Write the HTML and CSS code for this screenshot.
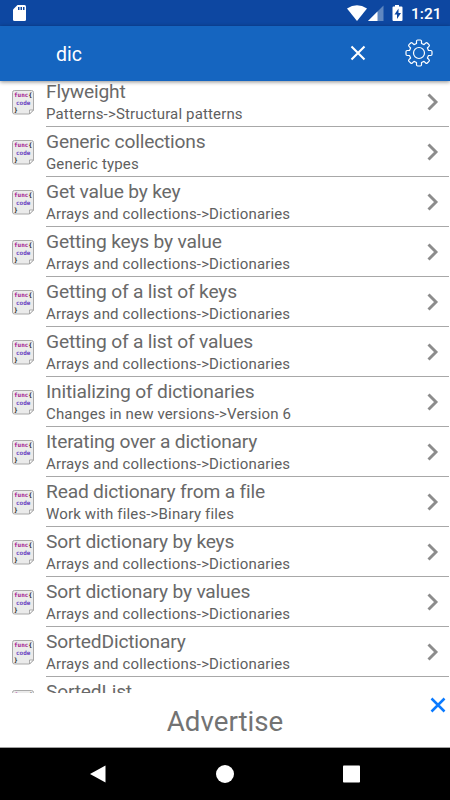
FILE: index.html
```html
<!DOCTYPE html>
<html lang="en">
<head>
<meta charset="utf-8">
<title>Search</title>
<link rel="stylesheet" href="styles.css">
</head>
<body>
<svg class="defs" aria-hidden="true">
  <symbol id="snippet" viewBox="0 0 22 25">
    <path d="M2.500.5h17a2 2 0 0 1 2 2V20l-4 4h-15a2 2 0 0 1-2-2V2.500a2 2 0 0 1 2-2z" fill="#ebebeb" stroke="#a9a9a9"/>
    <path d="M17.500 24v-4h4z" fill="#fff" stroke="#999" stroke-width=".8"/>
    <text x="2" y="6.500" class="fn">func</text>
    <text x="16.500" y="7" class="brace">{</text>
    <text x="4" y="14.500" class="code">code</text>
    <text x="2" y="22" class="brace">}</text>
  </symbol>
  <symbol id="chevron" viewBox="0 0 12 18"><path d="M1.500 1.500 9 9l-7.500 7.500" fill="none" stroke="#8c8c8c" stroke-width="2.900"/></symbol>
</svg>
<div class="screen">
  <div class="status">
    <svg class="sd" viewBox="0 0 13 16"><path d="M4.500 0H11.500A1.500 1.500 0 0 1 13 1.500v13a1.500 1.500 0 0 1-1.500 1.500h-10A1.500 1.500 0 0 1 0 14.500V4.500z" fill="#fff"/><path d="M5 2h1.500v3H5zM7.500 2H9v3H7.500zM10 2h1.500v3H10z" fill="#0d47a1"/></svg>
    <svg class="signals" viewBox="0 0 60 18">
      <path d="M0 3.500Q10 -3 20 3.500L10 16z" fill="#fff"/>
      <path d="M36.500.5V16H21z" fill="#5f87c0"/><path d="M30.500 6.500V16H21z" fill="#fff"/>
      <path d="M48 1.500V0h4v1.500h2.500a1 1 0 0 1 1 1V15a1 1 0 0 1-1 1h-8a1 1 0 0 1-1-1V2.500a1 1 0 0 1 1-1z" fill="#fff"/>
      <path d="M51.500 3.500 47.500 9.500h2.500V14l4-6h-2.500z" fill="#0d47a1"/>
    </svg>
    <span class="clock">1:21</span>
  </div>
  <div class="toolbar">
    <span class="query">dic</span>
    <svg class="clear" viewBox="0 0 16 16"><path d="m1.500 1.500 13 13m0-13-13 13" stroke="#fff" stroke-width="2.100"/></svg>
    <svg class="gear" viewBox="0 0 28 28"><path d="M11.500 4.500V2.200Q11.500 1 12.700 1h2.600Q16.500 1 16.500 2.200V4.500L19 5.600 20.700 4Q21.500 3.200 22.300 4L24 5.700Q24.800 6.500 24 7.300L22.400 9 23.500 11.500h2.300Q27 11.500 27 12.700v2.600Q27 16.500 25.800 16.500H23.500L22.400 19l1.600 1.700Q24.800 21.500 24 22.300L22.300 24Q21.500 24.800 20.700 24L19 22.400 16.500 23.500v2.300Q16.500 27 15.300 27h-2.600Q11.500 27 11.500 25.800V23.500L9 22.400 7.300 24Q6.500 24.800 5.700 24L4 22.300Q3.200 21.500 4 20.700L5.600 19 4.500 16.500H2.200Q1 16.500 1 15.300v-2.600Q1 11.500 2.200 11.500H4.500L5.600 9 4 7.300Q3.200 6.500 4 5.700L5.700 4Q6.500 3.200 7.300 4L9 5.600z"/><circle cx="14" cy="14" r="5.500"/></svg>
  </div>
  <ul class="list">
    <li class="row"><svg class="icon"><use href="#snippet"/></svg><div class="body"><div class="texts"><div class="title">Flyweight</div><div class="path">Patterns-&gt;Structural patterns</div></div><svg class="chev"><use href="#chevron"/></svg></div></li>
    <li class="row"><svg class="icon"><use href="#snippet"/></svg><div class="body"><div class="texts"><div class="title">Generic collections</div><div class="path">Generic types</div></div><svg class="chev"><use href="#chevron"/></svg></div></li>
    <li class="row"><svg class="icon"><use href="#snippet"/></svg><div class="body"><div class="texts"><div class="title">Get value by key</div><div class="path">Arrays and collections-&gt;Dictionaries</div></div><svg class="chev"><use href="#chevron"/></svg></div></li>
    <li class="row"><svg class="icon"><use href="#snippet"/></svg><div class="body"><div class="texts"><div class="title">Getting keys by value</div><div class="path">Arrays and collections-&gt;Dictionaries</div></div><svg class="chev"><use href="#chevron"/></svg></div></li>
    <li class="row"><svg class="icon"><use href="#snippet"/></svg><div class="body"><div class="texts"><div class="title">Getting of a list of keys</div><div class="path">Arrays and collections-&gt;Dictionaries</div></div><svg class="chev"><use href="#chevron"/></svg></div></li>
    <li class="row"><svg class="icon"><use href="#snippet"/></svg><div class="body"><div class="texts"><div class="title">Getting of a list of values</div><div class="path">Arrays and collections-&gt;Dictionaries</div></div><svg class="chev"><use href="#chevron"/></svg></div></li>
    <li class="row"><svg class="icon"><use href="#snippet"/></svg><div class="body"><div class="texts"><div class="title">Initializing of dictionaries</div><div class="path">Changes in new versions-&gt;Version 6</div></div><svg class="chev"><use href="#chevron"/></svg></div></li>
    <li class="row"><svg class="icon"><use href="#snippet"/></svg><div class="body"><div class="texts"><div class="title">Iterating over a dictionary</div><div class="path">Arrays and collections-&gt;Dictionaries</div></div><svg class="chev"><use href="#chevron"/></svg></div></li>
    <li class="row"><svg class="icon"><use href="#snippet"/></svg><div class="body"><div class="texts"><div class="title">Read dictionary from a file</div><div class="path">Work with files-&gt;Binary files</div></div><svg class="chev"><use href="#chevron"/></svg></div></li>
    <li class="row"><svg class="icon"><use href="#snippet"/></svg><div class="body"><div class="texts"><div class="title">Sort dictionary by keys</div><div class="path">Arrays and collections-&gt;Dictionaries</div></div><svg class="chev"><use href="#chevron"/></svg></div></li>
    <li class="row"><svg class="icon"><use href="#snippet"/></svg><div class="body"><div class="texts"><div class="title">Sort dictionary by values</div><div class="path">Arrays and collections-&gt;Dictionaries</div></div><svg class="chev"><use href="#chevron"/></svg></div></li>
    <li class="row"><svg class="icon"><use href="#snippet"/></svg><div class="body"><div class="texts"><div class="title">SortedDictionary</div><div class="path">Arrays and collections-&gt;Dictionaries</div></div><svg class="chev"><use href="#chevron"/></svg></div></li>
    <li class="row"><svg class="icon"><use href="#snippet"/></svg><div class="body"><div class="texts"><div class="title">SortedList</div></div></div></li>
  </ul>
  <div class="ad">
    <span>Advertise</span>
    <svg class="dismiss" viewBox="0 0 16 16"><path d="m1.500 1.500 13 13m0-13-13 13" stroke="#0a7aff" stroke-width="2.500"/></svg>
  </div>
  <div class="nav">
    <svg viewBox="0 0 18 18"><path d="M15.500.5v17L0 9z"/></svg>
    <svg viewBox="0 0 18 18"><circle cx="9" cy="9" r="9"/></svg>
    <svg viewBox="0 0 18 18"><rect x="1" y=".5" width="17" height="17" rx=".8"/></svg>
  </div>
</div>
</body>
</html>
```
FILE: styles.css
```css
body { margin: 0; font-family: Roboto, sans-serif; background: #fff; }
.defs { position: absolute; width: 0; height: 0; }
svg { display: block; flex: none; }
.screen { display: flex; flex-direction: column; width: 450px; height: 800px; overflow: hidden; }
.status { display: flex; align-items: flex-start; height: 26px; flex: none; box-sizing: border-box; padding: 5px 9px 0 13px; background: #0d47a1; }
.sd { width: 13px; height: 16px; }
.signals { width: 60px; height: 18px; margin-left: auto; margin-right: 4px; }
.clock { width: 30px; color: #fff; font-size: 15.5px; font-weight: 500; line-height: 18px; white-space: nowrap; }
.toolbar { position: relative; z-index: 1; display: flex; align-items: center; height: 54.5px; flex: none; box-sizing: border-box; padding: 0 17px 0 56px; background: #1565c0; box-shadow: 0 1px 4px rgba(0,0,0,.45); }
.query { flex: 1; color: #fff; font-size: 19.500px; line-height: 24px; padding-top: 3px; }
.clear { width: 16px; height: 16px; margin-right: 39px; }
.gear { width: 28px; height: 28px; fill: none; stroke: #fff; stroke-width: 1.2; stroke-linejoin: round; }
.list { height: 612px; flex: none; margin: 0; padding: 0; list-style: none; overflow: hidden; }
.row { display: flex; align-items: flex-start; height: 50px; padding-left: 12px; }
.row:first-child { margin-top: -3.5px; }
.icon { width: 22px; height: 25px; margin: 12.500px 12px 0 0; }
.fn, .code, .brace { font-family: "DejaVu Sans Mono", monospace; font-size: 6px; font-weight: 700; }
.fn { fill: #a3168f; }
.code { fill: #6a3fc0; }
.brace { fill: #222; }
.body { flex: 1; display: flex; height: 50px; box-sizing: border-box; border-bottom: 1px solid #a8a8a8; margin-right: 1px; }
.texts { flex: 1; color: #696969; }
.title { height: 23px; padding-top: 3px; font-size: 19.200px; letter-spacing: -.18px; line-height: 24px; }
.path { font-size: 15px; letter-spacing: .15px; line-height: 20px; padding-top: 1px; color: #606060; }
.chev { width: 12px; height: 18px; margin: 16px 10px 0 0; }
.ad { position: relative; display: flex; justify-content: center; height: 55px; flex: none; box-sizing: border-box; padding-top: 12px; border-bottom: 1px solid #a0a0a0; color: #737373; font-size: 27.700px; line-height: 34px; }
.dismiss { position: absolute; right: 4px; top: 4px; width: 16px; height: 16px; }
.nav { display: flex; align-items: center; justify-content: space-between; flex: 1; padding: 0 90px; background: #000; }
.nav svg { width: 18px; height: 18px; fill: #fff; }
```
